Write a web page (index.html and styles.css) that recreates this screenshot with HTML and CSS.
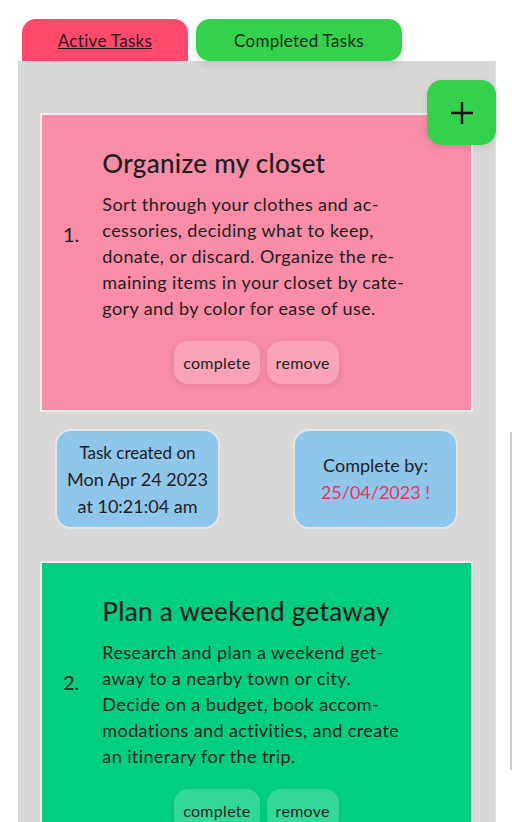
FILE: index.html
```html
<!DOCTYPE html>
<html lang="en">
<head>
<meta charset="UTF-8">
<meta name="viewport" content="width=device-width, initial-scale=1.0">
<title>Tasks</title>
<link rel="stylesheet" href="styles.css">
</head>
<body>
<div class="app">
    <div class="tabs">
        <button class="tab tab-active">Active Tasks</button>
        <button class="tab tab-completed">Completed Tasks</button>
    </div>

    <div class="panel">
        <button class="add-button" aria-label="Add task">
            <svg width="24" height="24" viewBox="0 0 24 24"><path d="M12 1v22M1 12h22" stroke="#111" stroke-width="2.4" fill="none"/></svg>
        </button>

        <!-- task 1 -->
        <div class="task task-pink">
            <div class="task-row">
                <div class="task-num">1.</div>
                <div class="task-body">
                    <h2>Organize my closet</h2>
                    <p>Sort through your clothes and ac&shy;cessories, deciding what to keep, donate, or discard. Organize the re&shy;maining items in your closet by cate&shy;gory and by color for ease of use.</p>
                </div>
            </div>
            <div class="task-actions">
                <button class="task-btn">complete</button>
                <button class="task-btn">remove</button>
            </div>
        </div>
        <div class="task-info">
            <div class="info-box">
                <span class="info-small">Task created on</span>
                <span>Mon Apr 24 2023</span>
                <span>at 10:21:04 am</span>
            </div>
            <div class="info-box">
                <span>Complete by:</span>
                <span class="due-late">25/04/2023 !</span>
            </div>
        </div>

        <!-- task 2 -->
        <div class="task task-green">
            <div class="task-row">
                <div class="task-num">2.</div>
                <div class="task-body">
                    <h2>Plan a weekend getaway</h2>
                    <p>Research and plan a weekend get&shy;away to a nearby town or city. Decide on a budget, book accom&shy;modations and activities, and create an itinerary for the trip.</p>
                </div>
            </div>
            <div class="task-actions">
                <button class="task-btn">complete</button>
                <button class="task-btn">remove</button>
            </div>
        </div>
    </div>
</div>
<div class="scroll-line"></div>
</body>
</html>
```
FILE: styles.css
```css
body {
font-family: Lato, "Noto Sans", sans-serif;
margin: 0;
padding: 0;
background-color: #fff;
color: #1e1e1e;
overflow: hidden;
}
.app {
padding: 19px 0 0 18px;
}
.tabs {
display: flex;
gap: 8px;
padding-left: 4px;
}
.tab {
font-family: inherit;
font-size: 17px;
letter-spacing: 0.3px;
color: #1e1e1e;
border: none;
height: 42px;
padding: 0;
}
.tab-active {
width: 166px;
background-color: #ff4a6e;
border-radius: 14px 14px 0 0;
text-decoration: underline;
}
.tab-completed {
width: 206px;
background-color: #33d14c;
border-radius: 14px;
box-shadow: 0 3px 8px rgba(0,0,0,0.12);
position: relative;
z-index: 1;
}
.panel {
position: relative;
width: 433px;
padding: 52px 22px 40px;
background-color: #d9d8d6;
border-right: 1px solid #e4e3e1;
}
.add-button {
position: absolute;
top: 19px;
right: -1px;
width: 69px;
height: 65px;
border: none;
border-radius: 15px;
background-color: #33d14c;
box-shadow: 0 2px 6px rgba(0,0,0,0.12);
display: flex;
align-items: center;
justify-content: center;
}
.task {
border: 2px solid #ededed;
padding: 32px 0 26px;
}
.task-pink {
background-color: #f78da7;
}
.task-green {
background-color: #00cf80;
}
.task-row {
display: flex;
align-items: center;
gap: 23px;
padding: 0 58px 0 21px;
}
.task-num {
font-size: 20px;
}
.task-body {
flex: 1;
}
.task-body h2 {
font-size: 26px;
font-weight: 500;
letter-spacing: 0.3px;
margin: 0 0 12px;
line-height: 32px;
}
.task-body p {
font-size: 18px;
letter-spacing: 0.4px;
line-height: 26px;
margin: 0;
}
.task-actions {
display: flex;
justify-content: center;
gap: 7px;
margin-top: 20px;
}
.task-btn {
font-family: inherit;
font-size: 16px;
letter-spacing: 0.3px;
color: #1e1e1e;
height: 43px;
padding: 0 9px;
border: none;
border-radius: 14px;
background-color: rgba(255,255,255,0.2);
box-shadow: 0 2px 6px rgba(0,0,0,0.1);
}
.task-info {
display: flex;
justify-content: space-between;
padding: 17px 15px 32px;
}
.info-box {
width: 161px;
height: 96px;
border: 2px solid #e6e6e6;
border-radius: 16px;
background-color: #8ec6ec;
display: flex;
flex-direction: column;
align-items: center;
justify-content: center;
font-size: 18px;
line-height: 27px;
}
.info-small {
font-size: 17px;
}
.due-late {
color: #f0325a;
}
.scroll-line {
position: fixed;
left: 510px;
top: 432px;
width: 2px;
height: 338px;
background-color: #cfcfcf;
}
```
